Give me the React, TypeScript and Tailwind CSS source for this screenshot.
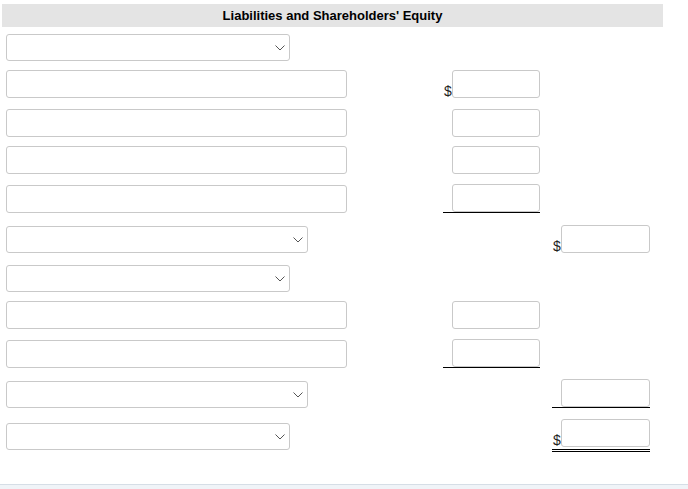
import React from "react";

type Label = "select" | "wide" | "input";
type Cell = { dollar?: boolean; line?: "single" | "double" } | null;
type Row = { mt: number; label: Label; c2: Cell; c3: Cell; lb?: number };

const rows: Row[] = [
  { mt: 7, label: "select", c2: null, c3: null },
  { mt: 9, label: "input", c2: { dollar: true }, c3: null },
  { mt: 11, label: "input", c2: {}, c3: null },
  { mt: 9, label: "input", c2: {}, c3: null },
  { mt: 10, label: "input", c2: { line: "single" }, c3: null },
  { mt: 12, label: "wide", c2: null, c3: { dollar: true } },
  { mt: 12, label: "select", c2: null, c3: null },
  { mt: 9, label: "input", c2: {}, c3: null },
  { mt: 10, label: "input", c2: { line: "single" }, c3: null },
  { mt: 11, label: "wide", c2: null, c3: { line: "single" } },
  { mt: 11, label: "select", c2: null, c3: { dollar: true, line: "double" }, lb: 2 },
];

function Chevron() {
  return (
    <svg width="10" height="6" viewBox="0 0 10 6" className="absolute right-[4px] top-1/2 -translate-y-1/2">
      <path d="M0.5 0.5 L5 5 L9.5 0.5" fill="none" stroke="#555" strokeWidth="1" />
    </svg>
  );
}

function LabelCtl({ kind }: { kind: Label }) {
  if (kind === "input") {
    return <div className="w-[341px] h-[28px] border border-[#c9c9c9] rounded-[3px] bg-white" />;
  }
  const w = kind === "wide" ? "w-[302px]" : "w-[284px]";
  return (
    <div className={`relative ${w} h-[27px] border border-[#c9c9c9] rounded-[3px] bg-white`}>
      <Chevron />
    </div>
  );
}

function AmountCell({ cell, width, inputW }: { cell: Cell; width: string; inputW: string }) {
  if (!cell) return <div className={width} />;
  const line =
    cell.line === "single"
      ? "border-b border-black"
      : cell.line === "double"
      ? "border-b-[3px] border-double border-black pb-[2px]"
      : "";
  return (
    <div className={`${width} flex items-end ${line}`}>
      <span className="w-[9px] text-[14px] leading-none text-[#222] pl-[1px]">{cell.dollar ? "$" : ""}</span>
      <div className={`${inputW} h-[28px] border border-[#c9c9c9] rounded-[3px] bg-white`} />
    </div>
  );
}

export default function App() {
  return (
    <div className="w-[688px] h-[489px] bg-white overflow-hidden" style={{ fontFamily: '"Liberation Sans", Arial, sans-serif' }}>
      <div className="pt-[4px] pl-[2px]">
        <div className="w-[661px] h-[23px] bg-[#e4e4e4] flex items-center justify-center text-[13px] font-bold text-black">
          Liabilities and Shareholders' Equity
        </div>
      </div>
      <div className="pl-[6px] flex flex-col">
        {rows.map((r, i) => (
          <div key={i} className="flex items-end" style={{ marginTop: r.mt }}>
            <div className="w-[437px] flex items-end" style={r.lb ? { marginBottom: r.lb } : undefined}>
              <LabelCtl kind={r.label} />
            </div>
            <AmountCell cell={r.c2} width="w-[97px]" inputW="w-[88px]" />
            <div className="w-[12px]" />
            <AmountCell cell={r.c3} width="w-[98px]" inputW="w-[89px]" />
          </div>
        ))}
      </div>
      <div className="mt-[32px] h-[20px] border-t border-[#d6dee6] bg-[#f0f4f8]" />
    </div>
  );
}
